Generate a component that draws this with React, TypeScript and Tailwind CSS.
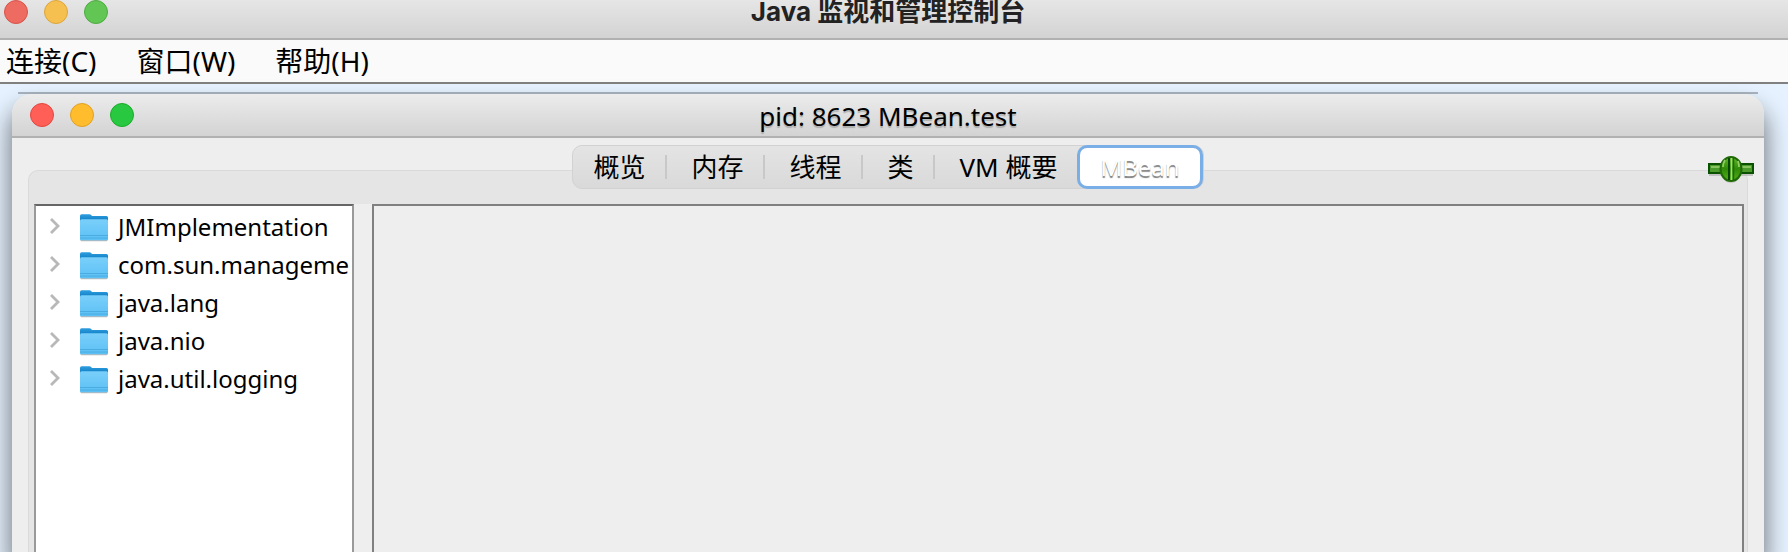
import React from 'react';

const menus = ['连接(C)', '窗口(W)', '帮助(H)'];
const tabs = ['概览', '内存', '线程', '类', 'VM 概要'];
const domains = ['JMImplementation', 'com.sun.manageme', 'java.lang', 'java.nio', 'java.util.logging'];

function Light({ label, color }: { label: string; color: string }) {
  return <button type="button" aria-label={label} className={`size-6 rounded-full border ${color}`} />;
}

function Folder() {
  return (
    <svg width="32" height="32" viewBox="0 0 32 32" aria-hidden="true">
      <defs>
        <linearGradient id="front" x1="0" y1="0" x2="0" y2="1">
          <stop offset="0" stopColor="#7acffa" />
          <stop offset="1" stopColor="#5cc0f5" />
        </linearGradient>
        <linearGradient id="back" x1="0" y1="0" x2="0" y2="1">
          <stop offset="0" stopColor="#2f9fe0" />
          <stop offset="1" stopColor="#0874bd" />
        </linearGradient>
      </defs>
      <path d="M2.500 28 h27 v1.500 q0 .8 -1 .8 h-25 q-1 0 -1 -.8z" fill="#8a8a8a" opacity=".6" />
      <path d="M2 5 q0-1.800 1.500-1.800 h8 q1 0 1.800 1 q.8 .9 2 .9 h13.200 q1.500 0 1.500 1.500 v5 h-28z" fill="url(#back)" />
      <path d="M2 10 q0-1.800 1.500-1.800 h25 q1.500 0 1.500 1.800 v18 q0 1.200 -1 1.200 h-26 q-1 0 -1 -1.200z" fill="url(#front)" />
      <path d="M2 24.500 h28 M2 27 h28" stroke="#48a9e0" strokeWidth="0.900" />
    </svg>
  );
}

function Chevron() {
  return (
    <svg width="12" height="18" viewBox="0 0 12 18" fill="none" aria-hidden="true">
      <path d="M2 1 L9 8 L2 15" stroke="#b8b8b8" strokeWidth="2.800" />
    </svg>
  );
}

function Plug() {
  return (
    <svg width="48" height="30" viewBox="0 0 48 30" aria-hidden="true">
      <defs>
        <linearGradient id="plug" x1="0" y1="0" x2="0" y2="1">
          <stop offset="0" stopColor="#62b52c" />
          <stop offset="0.500" stopColor="#2f8a08" />
          <stop offset="1" stopColor="#55b01c" />
        </linearGradient>
      </defs>
      <path d="M2 20 h44 v2 h-44z" fill="#a8a8a8" opacity=".6" />
      <ellipse cx="24" cy="17" rx="10" ry="12" fill="#a8a8a8" opacity=".5" />
      <rect x="2" y="10" width="44" height="9" fill="#4a9a2c" stroke="#0a5200" strokeWidth="2" />
      <path d="M4 13 h40" stroke="#86c45e" strokeWidth="2" />
      <ellipse cx="24" cy="15" rx="10.500" ry="12" fill="url(#plug)" stroke="#1f6a06" strokeWidth="2" />
      <path d="M22 4 v22" stroke="#0a4500" strokeWidth="2" />
      <path d="M24.500 4 v22" stroke="#a2dc78" strokeWidth="1.500" />
      <path d="M26.500 4 v22" stroke="#1c6a04" strokeWidth="1.500" />
      <path d="M18 6 q-2 3 -2 7 M31 7 q1 3 1 6" stroke="#8fce62" strokeWidth="1.800" fill="none" />
    </svg>
  );
}

export default function App() {
  return (
    <div className="flex h-screen flex-col overflow-hidden bg-[#e6f2ff] font-['Noto_Sans','Noto_Sans_CJK_SC',sans-serif] text-black">
      <header className="grid h-10 shrink-0 grid-cols-[1fr_auto_1fr] items-start border-b-2 border-[#b1b1b1] bg-linear-to-b from-[#e6e6e6] to-[#d3d3d3] pr-3">
        <div className="flex gap-4 pl-1">
          <Light label="关闭" color="border-[#d9534a] bg-[#ed6b60]" />
          <Light label="最小化" color="border-[#dba63b] bg-[#f5c04f]" />
          <Light label="缩放" color="border-[#4faa42] bg-[#62c655]" />
        </div>
        <h1 className="text-[26px] leading-6 font-bold text-[#222] font-['Inter','Noto_Sans_CJK_SC',sans-serif]">Java 监视和管理控制台</h1>
      </header>
      <nav className="flex h-11 shrink-0 items-center gap-10 border-b-2 border-[#808080] bg-[#fafafa] pl-1.5">
        {menus.map((m) => (
          <button type="button" key={m} className="text-[28px] leading-10">{m}</button>
        ))}
      </nav>
      <main className="flex min-h-0 flex-1 flex-col pt-2 pr-6 pl-3">
        <div className="mx-1.5 h-0.5 shrink-0 bg-[#a9b4c0]" />
        <section className="flex min-h-0 flex-1 flex-col rounded-t-[20px] bg-[#eee] shadow-[0_16px_24px_2px_rgba(0,0,0,0.5)]">
          <div className="grid h-11 shrink-0 grid-cols-[1fr_auto_1fr] items-center rounded-t-[20px] border-b-2 border-[#b1b1b1] bg-linear-to-b from-[#ececec] to-[#d3d3d3]">
            <div className="flex gap-4 pl-[18px]">
              <Light label="关闭" color="border-[#e2463f] bg-[#ff5f57]" />
              <Light label="最小化" color="border-[#e0a023] bg-[#ffbd2e]" />
              <Light label="缩放" color="border-[#1aab29] bg-[#28c940]" />
            </div>
            <h2 className="pt-0.5 text-[26px] leading-8 text-shadow-[0_2px_1px_rgba(0,0,0,0.2)]">pid: 8623 MBean.test</h2>
          </div>
          <div className="relative flex min-h-0 flex-1 flex-col px-4 pt-8">
            <div role="tablist" className="absolute inset-x-0 top-[7px] mx-auto flex h-11 w-fit items-center rounded-[10px] border border-[#d2d2d2] bg-linear-to-b from-[#e4e4e4] to-[#d9d9d9] text-[26px]">
              {tabs.map((t) => (
                <button type="button" role="tab" aria-selected="false" key={t} className="h-6 border-l-2 border-[#c8c8c8] pr-5 pl-6 leading-6 first:border-0 first:pl-5">{t}</button>
              ))}
              <button type="button" role="tab" aria-selected="true" className="h-11 rounded-[10px] border-3 border-[#7aaee6] bg-white px-5 text-2xl leading-9 text-white text-shadow-[0_2px_1px_rgba(0,0,0,0.5)]">MBean</button>
            </div>
            <div className="absolute top-4 right-[9px]"><Plug /></div>
            <div className="flex min-h-0 flex-1 flex-col rounded-t-[10px] border border-b-0 border-[#dadada] bg-[#e5e5e5] pt-[33px] pr-[3px] pl-[5px]">
              <div className="flex min-h-0 flex-1 gap-[18px] bg-[#eee]">
                <ul className="w-80 shrink-0 overflow-hidden border-x-2 border-t-2 border-x-[#999] border-t-[#666] bg-white pt-0.5">
                  {domains.map((d) => (
                    <li key={d} className="flex h-[38px] items-center">
                      <button type="button" className="flex items-center pl-[13px] text-2xl leading-9 whitespace-nowrap">
                        <Chevron />
                        <span className="mr-2 ml-[17px]"><Folder /></span>
                        {d}
                      </button>
                    </li>
                  ))}
                </ul>
                <div className="flex-1 border-x-2 border-t-2 border-[#808080]" />
              </div>
            </div>
          </div>
        </section>
      </main>
    </div>
  );
}
